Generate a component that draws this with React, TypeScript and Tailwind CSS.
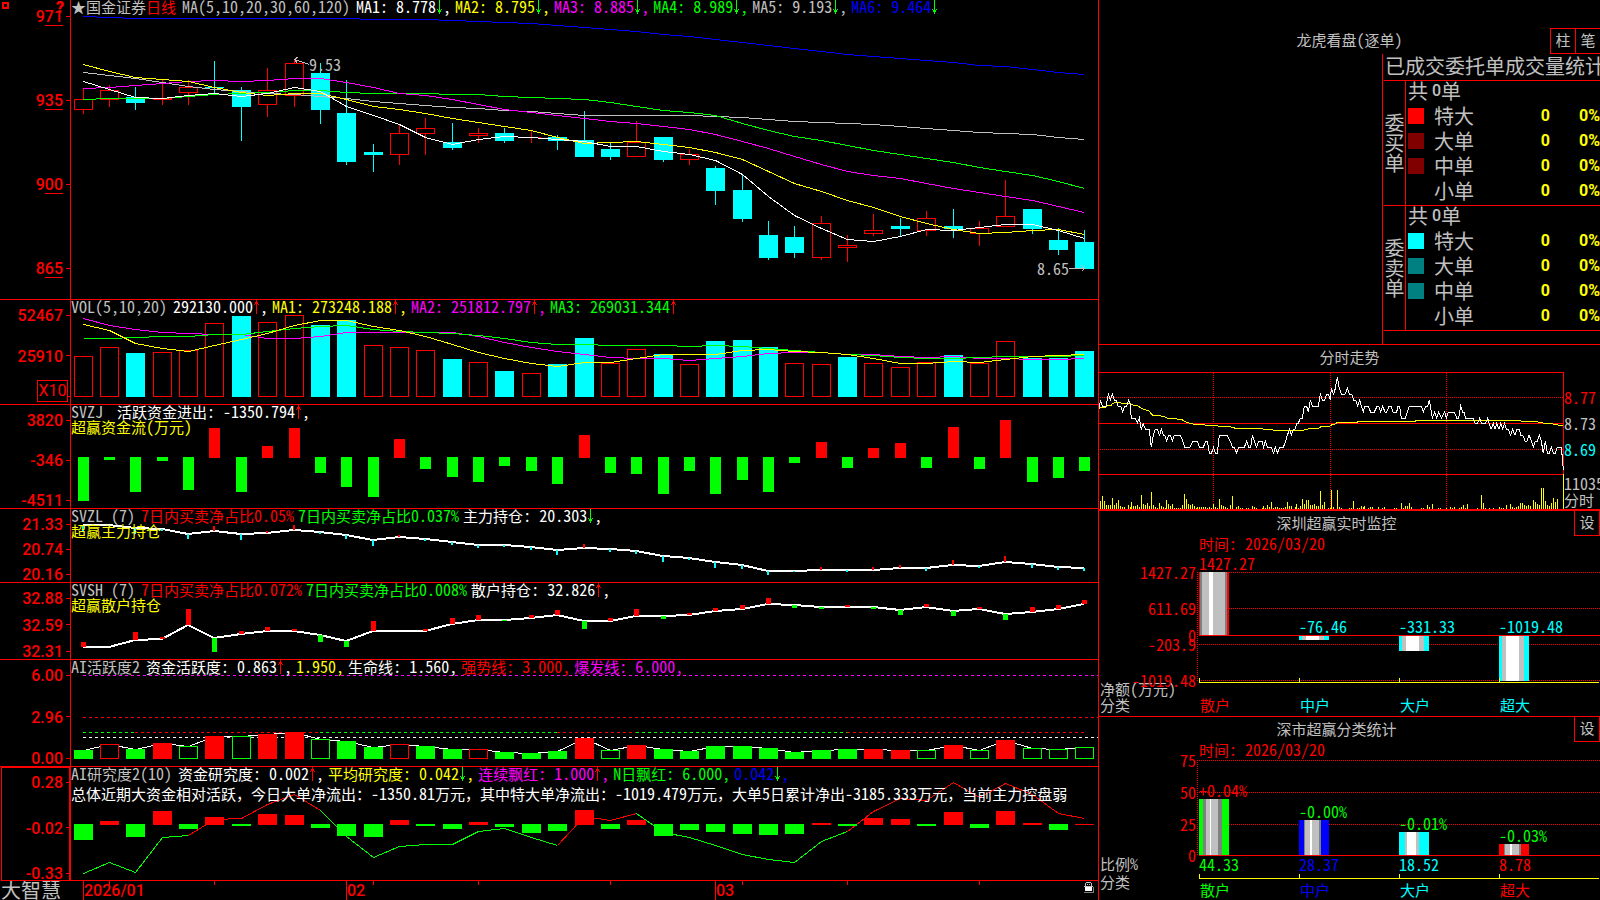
import React from 'react';
import type { ReactNode } from 'react';

type Pt = [number, number];

/* ---------- palette ---------- */
const RED = '#ff0000';
const GREEN = '#00ff00';
const CYAN = '#00ffff';
const YELLOW = '#ffff00';
const WHITE = '#ffffff';
const MAGENTA = '#ff00ff';
const SILVER = '#c0c0c0';
const GRAY = '#808080';
const BLUE = '#0000ff';

/* ---------- horizontal scale shared by every left-hand panel ---------- */
const cx = (i: number) => Math.floor(83.18 + i * 26.36);

/* ---------- data ---------- */
// type, body top, body bottom, high, low
const CANDLES: [string, number, number, number, number][] = [
  ['R', 99, 109, 89, 114], ['R', 90, 99, 85, 107], ['C', 97, 103, 87, 110], ['R', 98, 99, 80, 105],
  ['R', 87, 92, 80, 105], ['C', 87, 88, 61, 94], ['C', 90, 107, 87, 141], ['R', 90, 104, 68, 117],
  ['R', 63, 95, 59, 107], ['C', 73, 110, 63, 124], ['C', 113, 162, 80, 165], ['C', 152, 155, 144, 172],
  ['R', 133, 154, 125, 165], ['R', 128, 133, 118, 155], ['C', 142, 148, 123, 150], ['R', 133, 135, 128, 143],
  ['C', 133, 141, 128, 143], ['R', 137, 137, 130, 143], ['C', 137, 141, 135, 150], ['C', 140, 157, 111, 157],
  ['C', 149, 157, 143, 160], ['R', 142, 156, 121, 156], ['C', 137, 160, 137, 162], ['R', 154, 159, 149, 165],
  ['C', 168, 191, 166, 205], ['C', 190, 219, 175, 222], ['C', 235, 258, 221, 260], ['C', 237, 253, 226, 258],
  ['R', 223, 257, 216, 260], ['R', 245, 247, 235, 262], ['R', 230, 233, 214, 236], ['C', 226, 229, 218, 236],
  ['R', 218, 230, 211, 236], ['C', 226, 229, 209, 238], ['R', 228, 233, 221, 246], ['R', 216, 226, 180, 227],
  ['C', 209, 229, 209, 234], ['C', 240, 250, 228, 255], ['C', 242, 269, 230, 269],
];

const PRICE_LINES: [string, number[]][] = [
  [BLUE, [16, 17, 18, 18, 18, 18, 18, 18, 18, 18, 18, 19, 19, 19, 20, 21, 22, 23, 25, 27, 29, 31, 34, 36, 39, 42, 45, 48, 51, 54, 56, 58, 60, 62, 65, 66, 69, 72, 74]],
  [SILVER, [72, 75, 78, 82, 86, 89, 91, 93, 94, 96, 98, 101, 103, 105, 107, 108, 110, 111, 113, 115, 115, 115, 115, 115, 116, 117, 119, 121, 122, 123, 124, 126, 128, 130, 132, 133, 134, 137, 139]],
  [GREEN, [99, 98, 98, 98, 96, 94, 93, 92, 90, 90, 92, 93, 93, 93, 94, 94, 96, 97, 98, 99, 102, 106, 110, 112, 115, 123, 130, 136, 140, 145, 150, 154, 158, 162, 167, 171, 175, 181, 188]],
  [MAGENTA, [88, 87, 85, 83, 81, 80, 81, 80, 78, 78, 82, 87, 93, 95, 99, 104, 109, 112, 115, 118, 121, 123, 126, 129, 134, 141, 148, 156, 164, 171, 175, 178, 183, 188, 192, 196, 200, 206, 212]],
  [YELLOW, [64, 71, 77, 79, 81, 87, 92, 95, 93, 93, 99, 106, 109, 113, 118, 122, 126, 130, 137, 143, 142, 141, 144, 147, 152, 159, 171, 183, 191, 200, 207, 216, 223, 229, 233, 232, 230, 229, 234]],
  [WHITE, [81, 89, 97, 98, 95, 93, 96, 93, 87, 91, 106, 115, 124, 137, 144, 139, 136, 137, 139, 141, 146, 146, 151, 154, 160, 174, 196, 215, 228, 239, 241, 236, 229, 230, 227, 224, 224, 230, 238]],
];

const VOLUMES: [string, number][] = [
  ['R', 356], ['R', 347], ['C', 353], ['R', 352], ['R', 350], ['R', 323], ['C', 316], ['R', 322], ['R', 315], ['C', 325],
  ['C', 320], ['R', 345], ['R', 347], ['R', 350], ['C', 359], ['R', 362], ['C', 371], ['R', 373], ['C', 364], ['C', 338],
  ['R', 363], ['R', 349], ['C', 354], ['R', 364], ['C', 341], ['C', 340], ['C', 347], ['R', 363], ['R', 364], ['C', 357],
  ['R', 363], ['R', 367], ['R', 362], ['C', 355], ['R', 363], ['R', 341], ['C', 358], ['C', 358], ['C', 351],
];

const VOLUME_LINES: [string, number[]][] = [
  [MAGENTA, [318, 325, 329, 332, 333, 334, 334, 338, 338, 336, 332, 332, 332, 332, 332, 336, 342, 347, 351, 354, 357, 358, 358, 360, 358, 356, 353, 352, 352, 354, 354, 356, 357, 356, 358, 358, 359, 359, 358]],
  [GREEN, [338, 338, 337, 336, 336, 334, 334, 331, 328, 326, 325, 329, 331, 332, 333, 335, 338, 342, 344, 344, 345, 345, 345, 346, 345, 346, 348, 350, 352, 354, 355, 357, 358, 358, 357, 356, 356, 356, 355]],
  [YELLOW, [324, 330, 343, 348, 351, 345, 339, 333, 325, 320, 320, 326, 330, 336, 344, 352, 358, 363, 366, 362, 362, 358, 354, 354, 354, 350, 349, 351, 352, 354, 358, 363, 363, 361, 362, 359, 356, 355, 354]],
];

const FLOW: number[] = [
  501, 460, 492, 461, 490, 428, 492, 446, 428, 473, 487, 497, 439, 469, 477, 482, 466, 471, 484, 435,
  473, 474, 494, 471, 494, 480, 492, 463, 442, 468, 448, 443, 468, 427, 469, 420, 482, 478, 471,
];

const MAIN_LINE = [
  525, 525, 528, 529, 534, 531, 534, 533, 530, 532, 535, 540, 537, 539, 542, 545, 545, 547, 550, 548,
  549, 551, 556, 558, 562, 565, 571, 571, 570, 570, 570, 568, 568, 565, 566, 562, 564, 567, 568,
];
const MAIN_TICK = [
  531, 526, 534, 531, 539, 526, 540, 531, 525, 534, 539, 546, 535, 541, 545, 548, 547, 550, 555, 544,
  552, 554, 562, 560, 568, 569, 575, 572, 567, 572, 567, 565, 571, 560, 568, 556, 568, 570, 571,
];

const RETAIL_LINE = [
  647, 647, 640, 639, 625, 638, 634, 631, 631, 635, 641, 631, 631, 631, 624, 620, 620, 618, 615, 621,
  621, 616, 616, 615, 611, 609, 604, 605, 607, 607, 607, 610, 607, 611, 609, 614, 612, 609, 604,
];
const RETAIL_TICK = [
  642, 647, 632, 637, 609, 652, 631, 627, 629, 642, 647, 621, 631, 629, 618, 615, 621, 615, 610, 629,
  618, 609, 619, 613, 608, 605, 598, 608, 609, 605, 609, 615, 604, 616, 607, 620, 607, 605, 600,
];

// R/G filled bars, r/g outlined bars
const ACTIVE: [string, number][] = [
  ['G', 750], ['r', 744], ['G', 749], ['R', 743], ['g', 746], ['R', 736], ['g', 736], ['R', 734], ['R', 732], ['g', 739],
  ['G', 741], ['G', 747], ['r', 744], ['G', 746], ['G', 749], ['r', 749], ['G', 752], ['G', 753], ['G', 751], ['R', 738],
  ['g', 750], ['R', 745], ['G', 749], ['G', 751], ['G', 746], ['G', 746], ['G', 748], ['G', 752], ['G', 750], ['G', 749],
  ['R', 749], ['R', 750], ['g', 750], ['R', 745], ['g', 750], ['R', 740], ['g', 748], ['g', 749], ['g', 747],
];

const STUDY_BARS = [
  840, 821, 837, 811, 829, 817, 826, 814, 815, 828, 836, 837, 820, 826, 829, 822, 827, 833, 831, 810,
  829, 820, 836, 830, 832, 834, 835, 834, 823, 826, 818, 819, 826, 812, 828, 811, 823, 830, 824,
];
const STUDY_LINE = [
  873, 862, 872, 837, 835, 819, 818, 804, 794, 810, 836, 857, 846, 844, 844, 831, 828, 837, 845, 816,
  820, 813, 832, 837, 845, 854, 859, 862, 841, 831, 811, 798, 800, 782, 797, 783, 794, 813, 818,
];
const STUDY_PARTS: [string, number, number][] = [
  [GREEN, 0, 4], [RED, 4, 9], [GREEN, 9, 18], [RED, 18, 21], [GREEN, 21, 29], [RED, 29, 38],
];

// intraday samples, three units per pixel
const TICKS: Pt[] = [
  [16, 124], [19, 97], [26, 115], [36, 115], [43, 79], [49, 97], [55, 79], [61, 97], [67, 97], [72, 115], [80, 115], [86, 132],
  [92, 115], [98, 115], [104, 97], [108, 108], [112, 150], [124, 150], [130, 165], [136, 150], [142, 184], [148, 167], [154, 184],
  [166, 184], [172, 238], [178, 202], [184, 184], [190, 184], [197, 202], [202, 184], [208, 202], [212, 202], [218, 220], [224, 202],
  [229, 202], [235, 220], [241, 202], [259, 202], [265, 215], [272, 238], [288, 238], [296, 220], [310, 220], [316, 238], [328, 238],
  [335, 220], [340, 220], [346, 256], [352, 256], [359, 238], [364, 256], [370, 256], [376, 202], [400, 202], [408, 218], [416, 238],
  [421, 238], [427, 256], [434, 238], [451, 238], [458, 220], [464, 238], [470, 238], [475, 202], [481, 220], [488, 238], [494, 220],
  [504, 220], [509, 238], [514, 220], [521, 238], [532, 238], [539, 256], [544, 238], [550, 256], [557, 238], [568, 238], [574, 222],
  [580, 202], [587, 184], [592, 202], [598, 184], [603, 184], [608, 166], [613, 166], [619, 150], [625, 150], [631, 115], [638, 115],
  [643, 132], [649, 97], [655, 115], [673, 115], [679, 79], [686, 97], [692, 97], [698, 79], [704, 79], [709, 97], [712, 61],
  [718, 79], [722, 70], [730, 28], [736, 61], [742, 79], [753, 79], [760, 61], [766, 79], [773, 79], [779, 97], [785, 97], [791, 115],
  [797, 97], [808, 132], [812, 115], [823, 115], [830, 132], [841, 132], [849, 115], [854, 115], [860, 132], [866, 115], [873, 132],
  [878, 132], [885, 115], [891, 115], [897, 132], [908, 132], [912, 115], [917, 115], [922, 150], [934, 150], [946, 115], [982, 115],
  [988, 132], [995, 115], [1001, 115], [1006, 97], [1015, 150], [1022, 132], [1028, 150], [1034, 132], [1043, 150], [1052, 132],
  [1057, 150], [1063, 132], [1081, 132], [1088, 150], [1094, 150], [1100, 115], [1106, 132], [1110, 132], [1115, 150], [1137, 150],
  [1143, 166], [1151, 166], [1157, 150], [1163, 166], [1175, 166], [1181, 150], [1191, 184], [1198, 166], [1203, 184], [1208, 166],
  [1215, 184], [1220, 166], [1226, 184], [1232, 166], [1237, 184], [1243, 184], [1250, 202], [1256, 184], [1263, 202], [1268, 184],
  [1276, 184], [1280, 202], [1286, 202], [1294, 220], [1299, 220], [1305, 202], [1311, 215], [1318, 238], [1324, 220], [1330, 220],
  [1336, 202], [1342, 220], [1348, 256], [1354, 220], [1360, 256], [1366, 256], [1372, 238], [1378, 256], [1384, 256], [1390, 238],
  [1402, 238], [1405, 270], [1408, 305],
];
const AVERAGE: Pt[] = [
  [16, 118], [36, 117], [38, 112], [52, 112], [55, 106], [66, 104], [108, 107], [118, 112], [130, 113], [145, 122], [165, 129],
  [175, 141], [210, 145], [220, 151], [262, 154], [280, 164], [296, 168], [355, 173], [408, 176], [425, 181], [497, 182], [545, 187],
  [625, 187], [648, 182], [675, 180], [682, 175], [708, 174], [714, 170], [722, 169], [730, 163], [790, 163], [793, 160], [963, 160],
  [968, 157], [1277, 157], [1283, 160], [1323, 160], [1348, 165], [1371, 167], [1391, 171], [1407, 172],
];
const TURNOVER: Pt[] = [
  [19, 400], [25, 384], [31, 400], [37, 411], [43, 411], [49, 411], [55, 390], [61, 411], [67, 405], [73, 396], [79, 414], [85, 417],
  [91, 417], [103, 411], [109, 417], [112, 402], [118, 414], [124, 414], [130, 411], [136, 417], [142, 381], [148, 408], [154, 411],
  [160, 405], [166, 414], [172, 372], [178, 411], [184, 417], [190, 420], [196, 405], [202, 414], [208, 417], [214, 420], [217, 396],
  [223, 408], [229, 414], [235, 408], [241, 420], [247, 420], [253, 420], [259, 420], [265, 411], [271, 378], [277, 393], [283, 408],
  [289, 411], [295, 408], [301, 414], [307, 419], [310, 417], [316, 417], [322, 417], [328, 417], [334, 417], [340, 420], [346, 417],
  [352, 420], [358, 408], [364, 417], [370, 420], [376, 393], [382, 411], [388, 414], [394, 417], [400, 420], [409, 411], [415, 384],
  [427, 417], [433, 414], [439, 420], [445, 420], [457, 420], [463, 420], [475, 414], [481, 417], [487, 420], [505, 420], [508, 414],
  [514, 420], [520, 411], [526, 417], [532, 402], [538, 420], [544, 417], [550, 417], [556, 420], [562, 420], [568, 420], [574, 417],
  [580, 402], [586, 414], [592, 414], [604, 417], [607, 408], [613, 420], [619, 414], [625, 393], [631, 408], [637, 396], [643, 396],
  [649, 411], [655, 411], [661, 408], [667, 414], [673, 414], [679, 369], [685, 411], [691, 402], [703, 420], [709, 420], [712, 366],
  [718, 417], [730, 366], [736, 417], [742, 420], [766, 420], [772, 420], [778, 399], [790, 420], [796, 420], [802, 414], [808, 417],
  [811, 414], [823, 420], [829, 417], [835, 417], [853, 417], [865, 420], [871, 417], [901, 420], [907, 420], [922, 405], [928, 420],
  [934, 414], [940, 414], [946, 405], [952, 417], [982, 420], [988, 420], [1000, 411], [1006, 417], [1015, 408], [1033, 420],
  [1039, 420], [1057, 420], [1069, 417], [1075, 420], [1081, 417], [1096, 420], [1102, 417], [1108, 411], [1114, 420], [1120, 408],
  [1150, 420], [1162, 381], [1168, 405], [1174, 420], [1186, 420], [1198, 420], [1216, 417], [1222, 420], [1228, 420], [1237, 411],
  [1249, 408], [1255, 417], [1261, 420], [1267, 417], [1273, 414], [1279, 405], [1285, 405], [1291, 411], [1297, 414], [1303, 411],
  [1309, 414], [1318, 396], [1324, 402], [1330, 408], [1336, 411], [1342, 360], [1348, 360], [1354, 399], [1360, 411], [1366, 414],
  [1372, 405], [1378, 390], [1384, 402], [1390, 393], [1408, 318],
];

type Stripe = [string, number];
const NET_BARS: { top: number; bottom: number; stripes: Stripe[] }[] = [
  { top: 572, bottom: 635, stripes: [[RED, 1], [GRAY, 2], [SILVER, 7], [WHITE, 4], [SILVER, 12], [GRAY, 2], [RED, 2]] },
  { top: 636, bottom: 640, stripes: [[CYAN, 3], [SILVER, 4], [WHITE, 13], [SILVER, 5], [CYAN, 5]] },
  { top: 636, bottom: 651, stripes: [[CYAN, 3], [SILVER, 4], [WHITE, 13], [SILVER, 5], [CYAN, 5]] },
  { top: 636, bottom: 681, stripes: [[CYAN, 3], [SILVER, 4], [WHITE, 13], [SILVER, 5], [CYAN, 5]] },
];
const SHARE_BARS: { top: number; bottom: number; stripes: Stripe[] }[] = [
  { top: 799, bottom: 855, stripes: [[GREEN, 4], [GRAY, 3], [SILVER, 4], [WHITE, 1], [SILVER, 7], [GRAY, 4], [GREEN, 7]] },
  { top: 820, bottom: 855, stripes: [[BLUE, 5], [GRAY, 1], [SILVER, 5], [WHITE, 2], [SILVER, 7], [GRAY, 2], [BLUE, 8]] },
  { top: 832, bottom: 855, stripes: [[CYAN, 6], [SILVER, 2], [WHITE, 9], [SILVER, 3], [CYAN, 10]] },
  { top: 844, bottom: 855, stripes: [[RED, 5], [GRAY, 1], [SILVER, 5], [WHITE, 2], [SILVER, 7], [GRAY, 2], [RED, 8]] },
];

/* ---------- text ---------- */
const WIDE = /([\u2605\u2e80-\uffef]+)/;

/** Mixed text: CJK runs at 15px, Latin runs as half-width forms of a 16px face. */
function T({ children, className = '' }: { children: string; className?: string }) {
  return (
    <span className={`block pb-[3px] leading-[13px] whitespace-pre ${className}`}>
      {children.split(WIDE).map((run, i) =>
        run === '' ? null : (
          <span key={i} className={i % 2 ? 'text-[15px]' : "text-[16px] [font-feature-settings:'hwid']"}>
            {run}
          </span>
        ),
      )}
    </span>
  );
}

function Arrow({ dir }: { dir: 'up' | 'down' }) {
  return dir === 'down' ? (
    <svg className="h-[14px] w-[7px] shrink-0" viewBox="0 0 7 14" fill={GREEN} shapeRendering="crispEdges">
      <path d="M3 0h1v14h-1zM1 9h1v1h-1zM5 9h1v1h-1zM2 10h3v2h-3z" />
    </svg>
  ) : (
    <svg className="h-[14px] w-[7px] shrink-0" viewBox="0 0 7 14" fill={RED} shapeRendering="crispEdges">
      <path d="M3 0h1v14h-1zM1 4h1v1h-1zM5 4h1v1h-1zM2 2h3v2h-3z" />
    </svg>
  );
}

type Seg = { c: string; t: string; a?: 'up' | 'down'; end?: string };

function Header({ title, segs }: { title: ReactNode; segs: Seg[] }) {
  return (
    <div className="relative flex h-4 items-start gap-1 text-[#c0c0c0]">
      <div className="mr-0.5 flex shrink-0">{title}</div>
      {segs.map((s) => (
        <div key={s.t} className={`flex shrink-0 ${s.c}`}>
          <T>{s.t}</T>
          {s.a && <Arrow dir={s.a} />}
          {s.end && <T>{s.end}</T>}
        </div>
      ))}
    </div>
  );
}

function SubTitle({ children }: { children: string }) {
  return (
    <div className="relative -mt-px flex text-[#ffff00]">
      <T>{children}</T>
    </div>
  );
}

/* ---------- panel frame for the left-hand column ---------- */
type PanelProps = {
  labels: ReactNode[];
  axisClass?: string;
  className?: string;
  badge?: ReactNode;
  top: number;
  height: number;
  draw: ReactNode;
  children: ReactNode;
};

function Panel({ labels, axisClass = 'pt-[7px]', className = 'border-b border-[#ff0000]', badge, top, height, draw, children }: PanelProps) {
  return (
    <section className={`flex min-h-0 ${className}`}>
      <div className={`relative flex w-[70px] shrink-0 flex-col justify-between text-[#ff0000] ${axisClass}`}>
        {labels.map((l, i) => (
          <div key={i} className="flex h-4 items-center justify-end gap-[3px] font-['Roboto',sans-serif] text-[16px] leading-4 font-medium">
            <span className="pt-0.5">{l}</span>
            <i className="h-px w-1 bg-[#ff0000]" />
          </div>
        ))}
        {badge}
      </div>
      <div className="relative min-w-0 flex-1 border-l border-[#ff0000]">
        <svg
          className="absolute inset-0 h-full w-full"
          viewBox={`71 ${top} 1027 ${height}`}
          preserveAspectRatio="none"
          shapeRendering="crispEdges"
          fill="none"
        >
          {draw}
        </svg>
        {children}
      </div>
    </section>
  );
}

const series = (ys: number[], from = 0) => ys.map((y, i) => `${cx(i + from) + 0.5},${y + 0.5}`).join(' ');

function Bar({ i, top, bottom, color, hollow }: { i: number; top: number; bottom: number; color: string; hollow?: boolean }) {
  const x = cx(i) - 9;
  return hollow ? (
    <rect x={x + 0.5} y={top + 0.5} width={18} height={Math.max(bottom - top - 1, 0.01)} stroke={color} fill="none" />
  ) : (
    <rect x={x} y={top} width={19} height={bottom - top} fill={color} />
  );
}

function PriceChart() {
  return (
    <>
      {CANDLES.map(([k, t, b, h, l], i) => {
        const x = cx(i) + 0.5;
        return k === 'C' ? (
          <g key={i}>
            <line x1={x} x2={x} y1={h} y2={l} stroke={CYAN} />
            <rect x={x - 9.5} y={t} width={19} height={Math.max(b - t, 1)} fill={CYAN} />
          </g>
        ) : (
          <g key={i} stroke={RED}>
            <line x1={x} x2={x} y1={h} y2={t} />
            <line x1={x} x2={x} y1={b} y2={l} />
            {b > t ? <rect x={x - 9} y={t + 0.5} width={18} height={b - t} /> : <line x1={x - 9.5} x2={x + 9.5} y1={t + 0.5} y2={t + 0.5} />}
          </g>
        );
      })}
      {PRICE_LINES.map(([c, ys]) => (
        <polyline key={c} points={series(ys)} stroke={c} />
      ))}
      <path d="M309.5 64.5L294.5 59.5M298.5 56.5L294.5 59.5L297.5 63.5" stroke={SILVER} />
      <path d="M1069 268.5H1084.5M1081.5 265.5L1084.5 268.5L1081.5 271.5" stroke={SILVER} />
    </>
  );
}

function VolumeChart() {
  return (
    <>
      {VOLUMES.map(([k, t], i) => (
        <Bar key={i} i={i} top={t} bottom={397} color={k === 'C' ? CYAN : RED} hollow={k === 'R'} />
      ))}
      {VOLUME_LINES.map(([c, ys]) => (
        <polyline key={c} points={series(ys)} stroke={c} />
      ))}
    </>
  );
}

function FlowChart() {
  return (
    <>
      {FLOW.map((y, i) =>
        y > 457 ? (
          <rect key={i} x={cx(i) - 5} y={457} width={11} height={y - 457} fill={GREEN} />
        ) : (
          <rect key={i} x={cx(i) - 5} y={y} width={11} height={458 - y} fill={RED} />
        ),
      )}
    </>
  );
}

function HoldingChart({ line, tick, width, down }: { line: number[]; tick: number[]; width: number; down: string }) {
  return (
    <>
      <polyline points={line.map((y, i) => `${cx(i)},${y}`).join(' ')} stroke={WHITE} strokeWidth={2} />
      {tick.map((y, i) => (
        <rect
          key={i}
          x={cx(i) - Math.floor(width / 2)}
          y={Math.min(y, line[i])}
          width={width}
          height={Math.abs(y - line[i])}
          fill={y > line[i] ? down : RED}
        />
      ))}
    </>
  );
}

function ActiveChart() {
  const dash = '3 3';
  return (
    <>
      <line x1={83} x2={1098} y1={675.5} y2={675.5} stroke={MAGENTA} strokeDasharray={dash} />
      <line x1={83} x2={1098} y1={717.5} y2={717.5} stroke={RED} strokeDasharray={dash} />
      <line x1={83} x2={1098} y1={737.5} y2={737.5} stroke={WHITE} strokeDasharray={dash} />
      {([[GREEN, 0, 2], [RED, 2, 9], [GREEN, 9, 18], [RED, 18, 21], [GREEN, 21, 29], [RED, 29, 38]] as [string, number, number][]).map(
        ([c, a, b]) => (
          <line key={a} x1={cx(a)} x2={cx(b)} y1={732.5} y2={732.5} stroke={c} strokeDasharray={dash} />
        ),
      )}
      <polyline points={series(ACTIVE.map(([, y]) => y))} stroke={WHITE} />
      {ACTIVE.map(([k, y], i) => {
        const color = k.toUpperCase() === 'R' ? RED : GREEN;
        return k === k.toUpperCase() ? (
          <Bar key={i} i={i} top={y} bottom={759} color={color} />
        ) : (
          <rect key={i} x={cx(i) - 8.5} y={y + 0.5} width={18} height={758 - y} fill="#000000" stroke={color} />
        );
      })}
    </>
  );
}

function StudyChart() {
  return (
    <>
      {STUDY_PARTS.map(([c, a, b]) => (
        <polyline key={a} points={series(STUDY_LINE.slice(a, b + 1), a)} stroke={c} />
      ))}
      {STUDY_BARS.map((y, i) =>
        y > 824 ? <Bar key={i} i={i} top={824} bottom={y} color={GREEN} /> : <Bar key={i} i={i} top={y} bottom={825} color={RED} />,
      )}
    </>
  );
}

/* ---------- time axis ---------- */
function TimeAxis() {
  const marks: Pt[] = [[109, 5], [214, 4], [373, 4], [478, 4], [610, 4], [742, 4], [847, 4], [979, 4], [83, 19], [346, 19], [715, 19]];
  const dates: [number, string][] = [[84, '2026/01'], [347, '02'], [716, '03']];
  return (
    <footer className="flex h-[19px]">
      <div className="w-[70px] shrink-0 pl-px text-[20px] leading-[17px] whitespace-nowrap text-[#c0c0c0]">大智慧</div>
      <div className="relative min-w-0 flex-1">
        <svg className="absolute inset-0 h-full w-full" viewBox="70 881 1028 19" preserveAspectRatio="none" fill={RED} shapeRendering="crispEdges">
          {marks.map(([x, h]) => (
            <rect key={x} x={x} y={881} width={1} height={h} />
          ))}
        </svg>
        {dates.map(([x, d]) => (
          <span
            key={d}
            className="absolute top-0.5 font-['Roboto',sans-serif] text-[16px] leading-4 font-medium text-[#ff0000]"
            style={{ left: `${((x - 70) / 1028) * 100}%` }}
          >
            {d}
          </span>
        ))}
        <svg className="absolute top-px right-[3px] h-3 w-[11px]" viewBox="0 0 11 12" shapeRendering="crispEdges">
          <path d="M2 0h5v1h-5zM1 1h1v3h-1zM7 1h1v3h-1zM3 2h1v1h-1zM5 2h1v1h-1z" fill={SILVER} />
          <path d="M0 4h9v1h-9z" fill={SILVER} />
          <path d="M1 5h7v4h-7z" fill={WHITE} />
          <path d="M0 10h10v1h-10zM9 5h1v6h-1z" fill={GRAY} />
        </svg>
      </div>
    </footer>
  );
}

/* ---------- right-hand column ---------- */
function TitleRow({ title, children }: { title: string; children?: ReactNode }) {
  return (
    <div className="relative flex h-[26px] shrink-0 items-center">
      <h2 className="flex flex-1 justify-center">
        <T>{title}</T>
      </h2>
      {children}
    </div>
  );
}

function OrderGroup({ side, swatches }: { side: string; swatches: string[] }) {
  return (
    <tbody>
      <tr className="h-[25px]">
        <th rowSpan={5} scope="rowgroup" className="border-r border-b border-[#ff0000] p-0 align-middle font-normal">
          {side.split('').map((c) => (
            <span key={c} className="block leading-5">{c}</span>
          ))}
        </th>
        <td colSpan={4} className="py-0 pr-0 pl-0.5 align-top">
          <div className="flex h-5 gap-1 leading-5">
            <span>共</span>
            <span className="flex">
              <span className="font-['Roboto',sans-serif] text-[16px] leading-5 font-medium">0</span>
              <span>单</span>
            </span>
          </div>
        </td>
      </tr>
      {['特大', '大单', '中单', '小单'].map((n, i) => {
        const line = i === 3 ? 'border-b border-[#ff0000]' : '';
        return (
          <tr key={n} className="h-[25px]">
            <td className={`p-0 pt-0.5 pl-0.5 align-top ${line}`}>
              <span className={`block h-4 w-4 ${swatches[i]}`} />
            </td>
            <th scope="row" className={`p-0 text-left align-top leading-5 font-normal ${line}`}>{n}</th>
            <td className={`p-0 text-right align-top font-['Roboto',sans-serif] text-[16px] leading-5 font-bold text-[#ffff00] ${line}`}>0</td>
            <td className={`p-0 text-right align-top font-['Roboto',sans-serif] text-[16px] leading-5 font-bold text-[#ffff00] ${line}`}>0%</td>
          </tr>
        );
      })}
    </tbody>
  );
}

function OrderPanel() {
  return (
    <section className="flex min-h-0 flex-col overflow-hidden border-b border-[#ff0000] pt-7">
      <div className="grid h-[26px] shrink-0 grid-cols-[1fr_auto_1fr] items-center">
        <h2 className="col-start-2 flex">
          <T>龙虎看盘(逐单)</T>
        </h2>
        <div className="-mr-px flex justify-end">
          <button className="-mr-px h-[26px] w-[26px] border border-[#ff0000] pb-0.5 text-[15px] leading-5">柱</button>
          <button className="h-[26px] w-[26px] border border-[#ff0000] pb-0.5 text-[15px] leading-5">笔</button>
        </div>
      </div>
      <div className="flex min-h-0 flex-1">
        <div className="flex-1" />
        <div className="w-[218px] shrink-0 border-l border-[#ff0000] pl-px text-[20px]">
          <h3 className="h-[27px] border-b border-[#ff0000] pl-px leading-6 whitespace-nowrap">已成交委托单成交量统计</h3>
          <table className="w-full table-fixed border-separate border-spacing-0">
            <colgroup>
              <col className="w-[22px]" />
              <col className="w-7" />
              <col className="w-[60px]" />
              <col className="w-14" />
              <col />
            </colgroup>
            <OrderGroup side="委买单" swatches={['bg-[#ff0000]', 'bg-[#800000]', 'bg-[#800000]', '']} />
            <OrderGroup side="委卖单" swatches={['bg-[#00ffff]', 'bg-[#008080]', 'bg-[#008080]', '']} />
          </table>
        </div>
      </div>
    </section>
  );
}

const px = (pts: Pt[]) => pts.map(([x, y]) => `${1094 + x / 3},${368 + y / 3}`).join(' ');

function Intraday() {
  return (
    <section className="flex min-h-0 flex-col border-b-2 border-[#ff0000]">
      <TitleRow title="分时走势" />
      <div className="flex min-h-0 flex-1">
        <svg
          className="h-full min-w-0 flex-1"
          viewBox="1099 371 465 138"
          preserveAspectRatio="none"
          fill="none"
          shapeRendering="crispEdges"
        >
          <path d="M1099 372.5H1563.5V509M1099 423.5H1563M1099 474.5H1563" stroke={RED} />
          <path d="M1100 397.5H1563M1100 449.5H1563M1213.5 373V509M1330.5 373V509M1446.5 373V509" stroke={RED} strokeDasharray="1 1" />
          <path d={TURNOVER.map(([x, y]) => `M${Math.floor(1094 + x / 3) + 0.5} ${Math.round(368 + y / 3)}V509`).join('')} stroke={YELLOW} />
          <polyline points={px(AVERAGE)} stroke={YELLOW} />
          <polyline points={px(TICKS)} stroke={WHITE} />
        </svg>
        <div className="flex w-9 shrink-0 flex-col gap-2.5 pt-5">
          <T className="text-[#ff0000]">8.77</T>
          <T>8.73</T>
          <T className="text-[#00ffff]">8.69</T>
          <div className="mt-2 flex flex-col">
            <T>11035</T>
            <T>分时</T>
          </div>
        </div>
      </div>
    </section>
  );
}

type Mark = { x: number; y: number; t: string; c: string; right?: boolean };

function CategoryChart(props: {
  title: string;
  className: string;
  top: number;
  height: number;
  marks: Mark[];
  bars: { top: number; bottom: number; stripes: Stripe[] }[];
  dotted: number[];
  dottedFrom: number;
  dottedTo: number;
  zero: number;
  baseline: number;
}) {
  const { top, height } = props;
  return (
    <section className={`relative flex min-h-0 flex-col border-[#ff0000] ${props.className}`}>
      <svg
        className="absolute inset-0 h-full w-full"
        viewBox={`1099 ${top} 501 ${height}`}
        preserveAspectRatio="none"
        fill="none"
        shapeRendering="crispEdges"
      >
        <path
          d={props.dotted.map((y) => `M1197 ${y + 0.5}H1600`).join('') + `M1197.5 ${props.dottedFrom}V${props.dottedTo}`}
          stroke={RED}
          strokeDasharray="1 1"
        />
        <path d={`M1199 ${props.zero + 0.5}H1600`} stroke={RED} />
        {props.bars.map((b, i) => {
          let x = 1199 + i * 100;
          return b.stripes.map(([c, w], j) => {
            const at = x;
            x += w;
            return <rect key={`${i}-${j}`} x={at} y={b.top} width={w} height={b.bottom - b.top} fill={c} />;
          });
        })}
        <path
          d={`M1199 ${props.baseline + 0.5}H1599` + [0, 1, 2, 3].map((i) => `M${1199.5 + i * 100} ${props.baseline - 4}v4`).join('')}
          stroke={YELLOW}
        />
      </svg>
      <TitleRow title={props.title}>
        <button className="h-[25px] w-[26px] self-start border border-t-0 border-[#ff0000] pb-0.5 text-[15px] leading-5">设</button>
      </TitleRow>
      {props.marks.map((m) => (
        <span
          key={`${m.x}-${m.y}`}
          className={`absolute flex -translate-y-1/2 pt-0.5 ${m.right ? '-translate-x-full' : ''} ${m.c}`}
          style={{ left: `${((m.x - 1099) / 501) * 100}%`, top: `${((m.y - top) / height) * 100}%` }}
        >
          <T>{m.t}</T>
        </span>
      ))}
    </section>
  );
}

const R = 'text-[#ff0000]';
const G = 'text-[#00ff00]';
const C = 'text-[#00ffff]';
const B = 'text-[#0000ff]';
const S = 'text-[#c0c0c0]';
const Y = 'text-[#ffff00]';
const M = 'text-[#ff00ff]';
const W = 'text-white';

const tail = (a: string, b: string) => (
  <>
    {a}
    <span className="underline decoration-1 underline-offset-[3px]">{b}</span>
  </>
);

export default function App() {
  return (
    <main className="grid h-screen min-h-[600px] grid-cols-[minmax(0,1098fr)_minmax(0,502fr)] overflow-hidden bg-black font-['Noto_Sans_CJK_SC',sans-serif] text-[#c0c0c0]">
      <div className="grid min-h-0 grid-rows-[minmax(0,300fr)_minmax(0,105fr)_minmax(0,104fr)_minmax(0,74fr)_minmax(0,77fr)_minmax(0,107fr)_minmax(0,114fr)_19px]">
        <Panel
          labels={[tail('9', '71'), tail('9', '35'), tail('9', '00'), tail('8', '65')]}
          axisClass="pt-2 pb-[23px]"
          top={0}
          height={299}
          draw={<PriceChart />}
          badge={
            <>
              <i className="absolute top-0.5 left-0.5 h-[7px] w-[7px] border-2 border-[#ff0000]" />
              <span className="absolute top-0 left-14 font-['Roboto',sans-serif] text-[16px] leading-4 font-black">?</span>
            </>
          }
        >
          <Header
            title={
              <>
                <T>★国金证券</T>
                <T className="mr-1.5 text-[#ff0000]">日线</T>
                <T>MA(5,10,20,30,60,120)</T>
              </>
            }
            segs={[
              { c: W, t: 'MA1: 8.778', a: 'down', end: ',' },
              { c: Y, t: 'MA2: 8.795', a: 'down', end: ',' },
              { c: M, t: 'MA3: 8.885', a: 'down', end: ',' },
              { c: G, t: 'MA4: 8.989', a: 'down', end: ',' },
              { c: S, t: 'MA5: 9.193', a: 'down', end: ',' },
              { c: B, t: 'MA6: 9.464', a: 'down' },
            ]}
          />
          <span className="absolute flex -translate-y-1/2 pt-0.5" style={{ left: `${((309 - 71) / 1027) * 100}%`, top: `${(65 / 299) * 100}%` }}>
            <T>9.53</T>
          </span>
          <span className="absolute flex -translate-y-1/2 pt-0.5" style={{ left: `${((1037 - 71) / 1027) * 100}%`, top: `${(269 / 299) * 100}%` }}>
            <T>8.65</T>
          </span>
        </Panel>

        <Panel
          labels={['52467', '25910', '']}
          top={300}
          height={104}
          draw={<VolumeChart />}
          badge={
            <span className="absolute right-[2px] bottom-[2px] h-[22px] w-[31px] border border-[#ff0000] bg-black text-center font-['Roboto',sans-serif] text-[16px] leading-5">
              X10
            </span>
          }
        >
          <Header
            title={<T>VOL(5,10,20)</T>}
            segs={[
              { c: W, t: '292130.000', a: 'up', end: ',' },
              { c: Y, t: 'MA1: 273248.188', a: 'up', end: ',' },
              { c: M, t: 'MA2: 251812.797', a: 'up', end: ',' },
              { c: G, t: 'MA3: 269031.344', a: 'up' },
            ]}
          />
        </Panel>

        <Panel labels={['3820', '-346', '-4511']} top={405} height={103} draw={<FlowChart />}>
          <Header title={<T>{'SVZJ '}</T>} segs={[{ c: W, t: '活跃资金进出: -1350.794', a: 'up', end: ',' }]} />
          <SubTitle>超赢资金流(万元)</SubTitle>
        </Panel>

        <Panel
          labels={['21.33', '20.74', '20.16']}
          top={509}
          height={73}
          draw={<HoldingChart line={MAIN_LINE} tick={MAIN_TICK} width={2} down={CYAN} />}
        >
          <Header
            title={<T>SVZL (7)</T>}
            segs={[
              { c: R, t: '7日内买卖净占比0.05%' },
              { c: G, t: '7日内买卖净占比0.037%' },
              { c: W, t: '主力持仓: 20.303', a: 'down', end: ',' },
            ]}
          />
          <SubTitle>超赢主力持仓</SubTitle>
        </Panel>

        <Panel
          labels={['32.88', '32.59', '32.31']}
          top={583}
          height={76}
          draw={<HoldingChart line={RETAIL_LINE} tick={RETAIL_TICK} width={5} down={GREEN} />}
        >
          <Header
            title={<T>SVSH (7)</T>}
            segs={[
              { c: R, t: '7日内买卖净占比0.072%' },
              { c: G, t: '7日内买卖净占比0.008%' },
              { c: W, t: '散户持仓: 32.826', a: 'up', end: ',' },
            ]}
          />
          <SubTitle>超赢散户持仓</SubTitle>
        </Panel>

        <Panel labels={['6.00', '2.96', '0.00']} top={660} height={106} draw={<ActiveChart />}>
          <Header
            title={<T>AI活跃度2</T>}
            segs={[
              { c: W, t: '资金活跃度: 0.863', a: 'up', end: ',' },
              { c: Y, t: '1.950,' },
              { c: W, t: '生命线: 1.560,' },
              { c: R, t: '强势线: 3.000,' },
              { c: M, t: '爆发线: 6.000,' },
            ]}
          />
        </Panel>

        <Panel
          labels={['0.28', '-0.02', '-0.33']}
          axisClass="pt-[7px] before:absolute before:inset-y-0 before:left-px before:right-0 before:border before:border-[#ff0000]"
          className="[&>*:last-child]:border-b"
          top={767}
          height={113}
          draw={<StudyChart />}
        >
          <Header
            title={<T>AI研究度2(10)</T>}
            segs={[
              { c: W, t: '资金研究度: 0.002', a: 'up', end: ',' },
              { c: Y, t: '平均研究度: 0.042', a: 'down', end: ',' },
              { c: M, t: '连续飘红: 1.000', a: 'up', end: ',' },
              { c: G, t: 'N日飘红: 6.000,' },
              { c: B, t: '0.042', a: 'down', end: ',' },
            ]}
          />
          <p className="relative mt-1 flex">
            <T className="text-white">
              总体近期大资金相对活跃，今日大单净流出：-1350.81万元，其中特大单净流出：-1019.479万元，大单5日累计净出-3185.333万元，当前主力控盘弱
            </T>
          </p>
        </Panel>

        <TimeAxis />
      </div>

      <aside className="grid min-h-0 grid-rows-[minmax(0,345fr)_minmax(0,166fr)_minmax(0,206fr)_minmax(0,183fr)] border-l border-[#ff0000]">
        <OrderPanel />
        <Intraday />
        <CategoryChart
          title="深圳超赢实时监控"
          className="border-b"
          top={511}
          height={205}
          bars={NET_BARS}
          dotted={[572, 608, 644, 680]}
          dottedFrom={572}
          dottedTo={680}
          zero={635}
          baseline={682}
          marks={[
            { x: 1100, y: 689, t: '净额(万元)', c: S },
            { x: 1100, y: 705, t: '分类', c: S },
            { x: 1199, y: 544, t: '时间: 2026/03/20', c: R },
            { x: 1199, y: 564, t: '1427.27', c: R },
            { x: 1299, y: 627, t: '-76.46', c: C },
            { x: 1399, y: 627, t: '-331.33', c: C },
            { x: 1499, y: 627, t: '-1019.48', c: C },
            { x: 1196, y: 573, t: '1427.27', c: R, right: true },
            { x: 1196, y: 609, t: '611.69', c: R, right: true },
            { x: 1196, y: 636, t: '0', c: R, right: true },
            { x: 1196, y: 645, t: '-203.9', c: R, right: true },
            { x: 1196, y: 681, t: '-1019.48', c: R, right: true },
            { x: 1200, y: 705, t: '散户', c: R },
            { x: 1300, y: 705, t: '中户', c: C },
            { x: 1400, y: 705, t: '大户', c: C },
            { x: 1500, y: 705, t: '超大', c: C },
          ]}
        />
        <CategoryChart
          title="深市超赢分类统计"
          className=""
          top={717}
          height={183}
          bars={SHARE_BARS}
          dotted={[760, 792, 824]}
          dottedFrom={760}
          dottedTo={855}
          zero={855}
          baseline={878}
          marks={[
            { x: 1199, y: 750, t: '时间: 2026/03/20', c: R },
            { x: 1199, y: 791, t: '+0.04%', c: R },
            { x: 1299, y: 812, t: '-0.00%', c: G },
            { x: 1399, y: 824, t: '-0.01%', c: G },
            { x: 1499, y: 836, t: '-0.03%', c: G },
            { x: 1196, y: 761, t: '75', c: R, right: true },
            { x: 1196, y: 793, t: '50', c: R, right: true },
            { x: 1196, y: 825, t: '25', c: R, right: true },
            { x: 1196, y: 856, t: '0', c: R, right: true },
            { x: 1199, y: 865, t: '44.33', c: G },
            { x: 1299, y: 865, t: '28.37', c: B },
            { x: 1399, y: 865, t: '18.52', c: C },
            { x: 1499, y: 865, t: '8.78', c: R },
            { x: 1100, y: 864, t: '比例%', c: S },
            { x: 1100, y: 882, t: '分类', c: S },
            { x: 1200, y: 890, t: '散户', c: G },
            { x: 1300, y: 890, t: '中户', c: B },
            { x: 1400, y: 890, t: '大户', c: C },
            { x: 1500, y: 890, t: '超大', c: R },
          ]}
        />
      </aside>
    </main>
  );
}
